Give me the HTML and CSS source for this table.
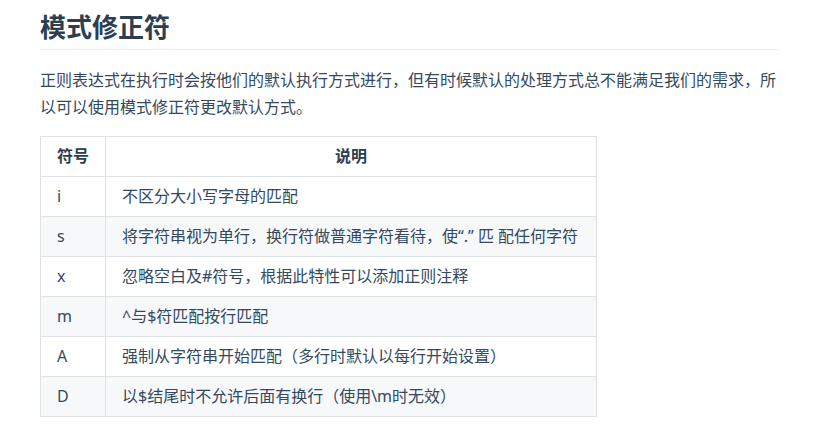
FILE: index.html
```html
<!DOCTYPE html>
<html lang="zh-CN">
<head>
<meta charset="utf-8">
<title>模式修正符</title>
<link rel="stylesheet" href="styles.css">
</head>
<body>
<div class="content">
  <h2 class="title">模式修正符</h2>
  <p class="intro">正则表达式在执行时会按他们的默认执行方式进行，但有时候默认的处理方式总不能满足我们的需求，所以可以使用模式修正符更改默认方式。</p>
  <table class="mods">
    <colgroup><col class="c1"><col class="c2"></colgroup>
    <thead>
      <tr><th>符号</th><th>说明</th></tr>
    </thead>
    <tbody>
      <tr><td>i</td><td>不区分大小写字母的匹配</td></tr>
      <tr><td>s</td><td>将字符串视为单行，换行符做普通字符看待，使“.” 匹 配任何字符</td></tr>
      <tr><td>x</td><td>忽略空白及#符号，根据此特性可以添加正则注释</td></tr>
      <tr><td>m</td><td>^与$符匹配按行匹配</td></tr>
      <tr><td>A</td><td>强制从字符串开始匹配（多行时默认以每行开始设置）</td></tr>
      <tr><td>D</td><td>以$结尾时不允许后面有换行（使用\m时无效）</td></tr>
    </tbody>
  </table>
</div>
</body>
</html>
```
FILE: styles.css
```css
html, body {
  margin: 0;
  padding: 0;
  background: #fff;
}
body {
  font-family: "Noto Sans", "Noto Sans CJK SC", sans-serif;
  color: #2c3e50;
  font-size: 16px;
}
.content {
  width: 740px;
  padding: 0 40px;
}
.title {
  margin: 0;
  padding-top: 11px;
  padding-bottom: 6px;
  font-size: 26px;
  line-height: 32px;
  font-weight: 700;
  border-bottom: 1px solid #eaecef;
  color: #2c3e50;
}
.intro {
  margin: 17px 0 0 0;
  line-height: 27px;
  color: #34495e;
}
.mods {
  margin-top: 15px;
  border-collapse: collapse;
  table-layout: fixed;
  width: 556px;
  color: #34495e;
}
.mods .c1 { width: 65px; }
.mods .c2 { width: 491px; }
.mods th, .mods td {
  border: 1px solid #dfe2e5;
  padding: 9px 16px;
  line-height: 21px;
  height: 21px;
  font-size: 16px;
}
.mods th {
  font-weight: 700;
  text-align: center;
  color: #2c3e50;
}
.mods td {
  text-align: left;
}
.mods tbody tr:nth-child(2n) {
  background: #f6f8fa;
}
```
